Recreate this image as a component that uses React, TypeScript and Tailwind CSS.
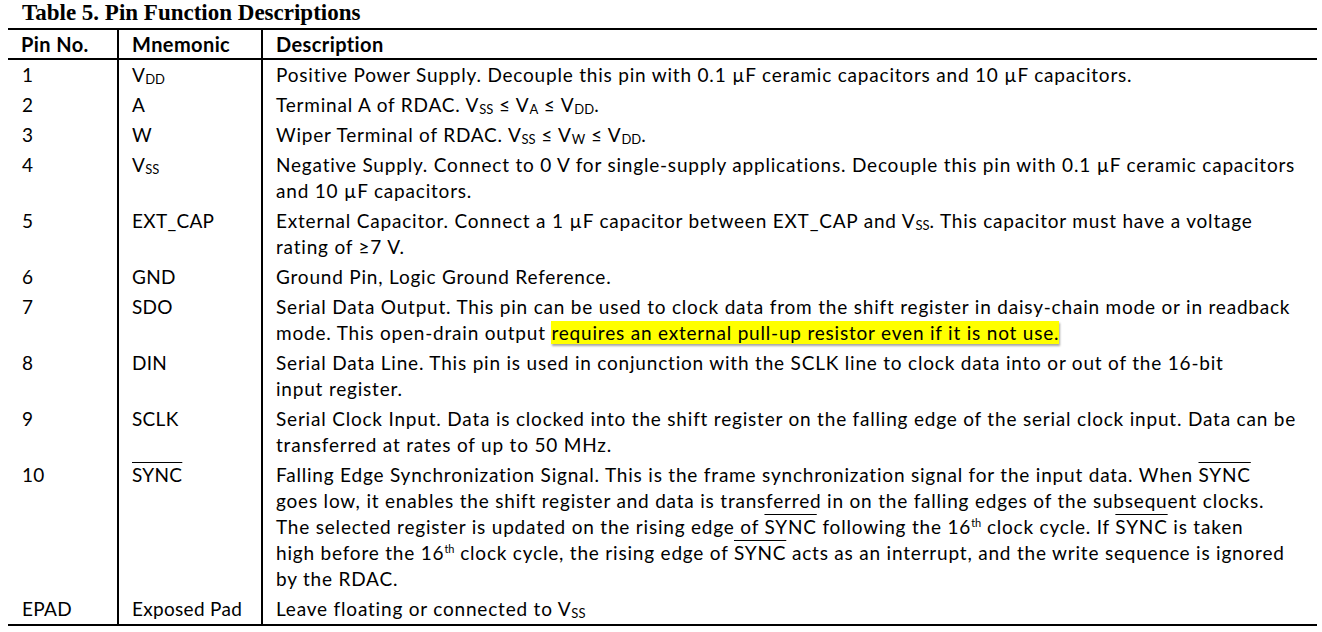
import type { ReactNode } from "react"

function Sub({ children }: { children: ReactNode }) {
  return <span className="text-[13px] leading-[0] tracking-normal align-[-2px]">{children}</span>
}

function Sup({ children }: { children: ReactNode }) {
  return <span className="text-[11px] leading-[0] tracking-normal align-[7px]">{children}</span>
}

function Bar({ children }: { children: ReactNode }) {
  return <span className="overline decoration-1">{children}</span>
}

type Row = {
  pin: string
  name: ReactNode
  lines: ReactNode[]
}

const rows: Row[] = [
  {
    pin: "1",
    name: <>V<Sub>DD</Sub></>,
    lines: ["Positive Power Supply. Decouple this pin with 0.1 µF ceramic capacitors and 10 µF capacitors."],
  },
  {
    pin: "2",
    name: "A",
    lines: [<>Terminal A of RDAC. V<Sub>SS</Sub> ≤ V<Sub>A</Sub> ≤ V<Sub>DD</Sub>.</>],
  },
  {
    pin: "3",
    name: "W",
    lines: [<>Wiper Terminal of RDAC. V<Sub>SS</Sub> ≤ V<Sub>W</Sub> ≤ V<Sub>DD</Sub>.</>],
  },
  {
    pin: "4",
    name: <>V<Sub>SS</Sub></>,
    lines: [
      "Negative Supply. Connect to 0 V for single-supply applications. Decouple this pin with 0.1 µF ceramic capacitors",
      "and 10 µF capacitors.",
    ],
  },
  {
    pin: "5",
    name: "EXT_CAP",
    lines: [
      <>External Capacitor. Connect a 1 µF capacitor between EXT_CAP and V<Sub>SS</Sub>. This capacitor must have a voltage</>,
      "rating of ≥7 V.",
    ],
  },
  {
    pin: "6",
    name: "GND",
    lines: ["Ground Pin, Logic Ground Reference."],
  },
  {
    pin: "7",
    name: "SDO",
    lines: [
      "Serial Data Output. This pin can be used to clock data from the shift register in daisy-chain mode or in readback",
      <>
        mode. This open-drain output{" "}
        <span className="bg-[#ffff00] shadow-[1px_2px_2px_rgba(0,0,0,0.35)]">
          requires an external pull-up resistor even if it is not use.
        </span>
      </>,
    ],
  },
  {
    pin: "8",
    name: "DIN",
    lines: [
      "Serial Data Line. This pin is used in conjunction with the SCLK line to clock data into or out of the 16-bit",
      "input register.",
    ],
  },
  {
    pin: "9",
    name: "SCLK",
    lines: [
      "Serial Clock Input. Data is clocked into the shift register on the falling edge of the serial clock input. Data can be",
      "transferred at rates of up to 50 MHz.",
    ],
  },
  {
    pin: "10",
    name: <Bar>SYNC</Bar>,
    lines: [
      <>Falling Edge Synchronization Signal. This is the frame synchronization signal for the input data. When <Bar>SYNC</Bar></>,
      "goes low, it enables the shift register and data is transferred in on the falling edges of the subsequent clocks.",
      <>The selected register is updated on the rising edge of <Bar>SYNC</Bar> following the 16<Sup>th</Sup> clock cycle. If <Bar>SYNC</Bar> is taken</>,
      <>high before the 16<Sup>th</Sup> clock cycle, the rising edge of <Bar>SYNC</Bar> acts as an interrupt, and the write sequence is ignored</>,
      "by the RDAC.",
    ],
  },
  {
    pin: "EPAD",
    name: "Exposed Pad",
    lines: [<>Leave floating or connected to V<Sub>SS</Sub></>],
  },
]

export default function App() {
  return (
    <div className="w-[1322px] h-[632px] bg-white text-black overflow-hidden pl-[8px]">
      <h1 className="pl-[14px] h-[28px] font-['Liberation_Serif',serif] font-bold text-[23px] leading-[26px]">
        Table 5. Pin Function Descriptions
      </h1>
      <table className="w-[1309px] border-collapse font-['Lato',sans-serif] text-[19px] leading-[26px]">
        <thead>
          <tr className="border-t-2 border-b-2 border-black h-[30px] text-left text-[20px] tracking-[0.4px]">
            <th className="w-[110px] pl-[13px] font-bold">Pin No.</th>
            <th className="w-[144px] pl-[13px] border-l-2 border-black font-bold">Mnemonic</th>
            <th className="pl-[13px] border-l-2 border-black font-bold">Description</th>
          </tr>
        </thead>
        <tbody className="border-b-2 border-black">
          {rows.map((r) => (
            <tr key={r.pin} className="align-top">
              <td className="pl-[14px] py-[2px] tracking-[0.3px]">{r.pin}</td>
              <td className="pl-[13px] py-[2px] border-l-2 border-black whitespace-nowrap tracking-[0.3px]">{r.name}</td>
              <td className="pl-[13px] py-[2px] border-l-2 border-black tracking-[0.8px]">
                {r.lines.map((l, i) => (
                  <div key={i} className="whitespace-nowrap">{l}</div>
                ))}
              </td>
            </tr>
          ))}
        </tbody>
      </table>
    </div>
  )
}
